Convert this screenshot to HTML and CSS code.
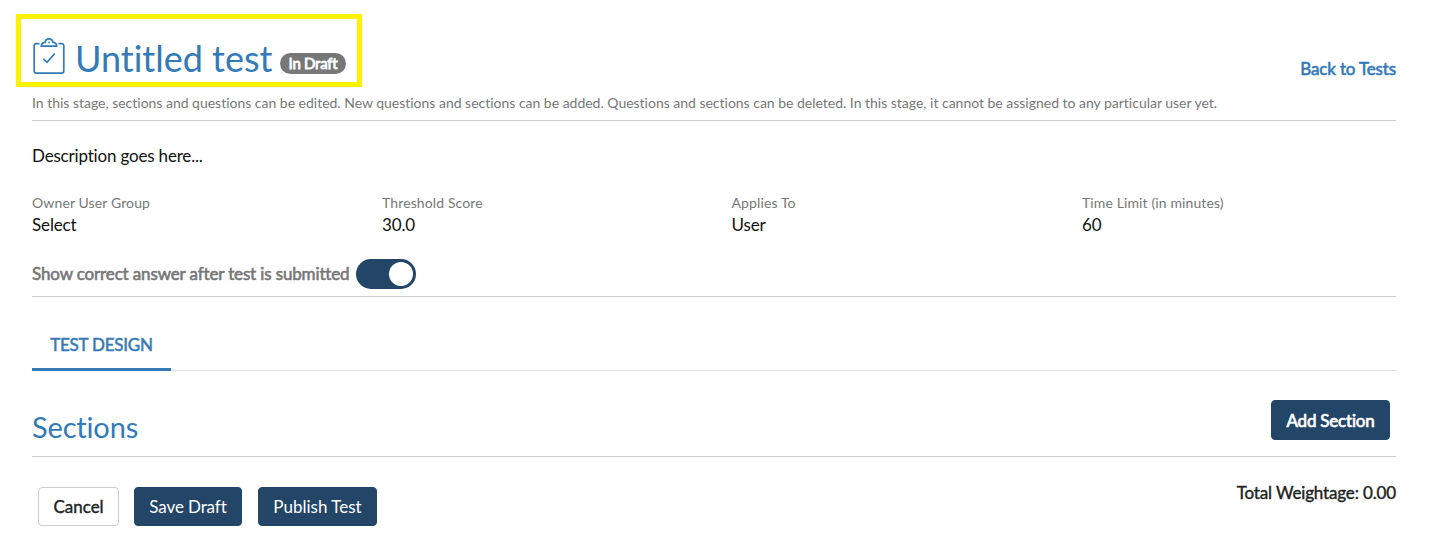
FILE: index.html
```html
<!DOCTYPE html>
<html lang="en"><head><meta charset="utf-8"><title>Untitled test</title><link rel="stylesheet" href="styles.css"></head>
<body><main class="page">
<header class="header">
<div class="title-box">
<svg class="clip" viewBox="0 0 32 37" width="32" height="37" fill="none" stroke="#337ab7" stroke-width="1.7"><path d="M6.500 5.700H3.300Q1.200 5.700 1.200 8V33Q1.200 35.200 3.300 35.200H28.700Q30.800 35.200 30.800 33V8Q30.800 5.700 28.700 5.700H25.500"/><path d="M8.300 8.200C8.300 5.500 9.800 4.700 12 4.400C12.500 2 13.700 .9 16 .9S19.500 2 20 4.400C22.200 4.700 23.700 5.500 23.700 8.200Z"/><circle cx="16" cy="4.500" r=".9" fill="#337ab7" stroke="none"/><path d="M10.300 20.800L14 24.300L21.800 15.500"/></svg>
<h1 class="title">Untitled test</h1><span class="badge">In Draft</span></div>
<a class="back">Back to Tests</a></header>
<p class="note">In this stage, sections and questions can be edited. New questions and sections can be added. Questions and sections can be deleted. In this stage, it cannot be assigned to any particular user yet.</p>
<p class="description">Description goes here...</p>
<section class="fields">
<div><div class="label">Owner User Group</div><div class="value">Select</div></div>
<div><div class="label">Threshold Score</div><div class="value">30.0</div></div>
<div><div class="label">Applies To</div><div class="value">User</div></div>
<div><div class="label">Time Limit (in minutes)</div><div class="value">60</div></div>
</section>
<div class="toggle-row"><span class="toggle-label">Show correct answer after test is submitted</span><span class="switch"></span></div>
<nav class="tabs"><span class="tab">TEST DESIGN</span></nav>
<div class="sections"><h2 class="heading">Sections</h2><button class="btn primary add">Add Section</button></div>
<footer class="footer"><div class="actions"><button class="btn cancel">Cancel</button><button class="btn primary save">Save Draft</button><button class="btn primary publish">Publish Test</button></div><span class="total">Total Weightage: 0.00</span></footer>
</main></body></html>
```
FILE: styles.css
```css
*{box-sizing:border-box}
body{margin:0;background:#fff;color:#111;font:17px/24px Lato,sans-serif;font-variant-ligatures:none}
h1,h2,p{margin:0;font-weight:400}
.page{padding:14px 35px 0 32px}
.header{display:flex;justify-content:space-between;height:74px}
.title-box{display:flex;width:346px;height:73px;margin-left:-16px;border:5px solid #fff200;padding:0 0 0 12px}
.clip{margin-top:19px;flex:none}
.title{width:196px;margin:18px 0 0 10px;font-size:36px;line-height:42px;color:#337ab7;white-space:nowrap}
.badge{flex:none;margin:34px 0 0 9px;width:66px;height:21px;border-radius:11px;background:#777;color:#fff;font-size:15px;letter-spacing:-.25px;line-height:20px;text-align:center;-webkit-text-stroke:.8px #fff;white-space:nowrap}
.back{margin-top:43px;letter-spacing:-.15px;color:#337ab7;-webkit-text-stroke:.6px #337ab7}
.note{height:33px;padding-top:5px;border-bottom:1px solid #ccc;font-size:14px;line-height:20px;letter-spacing:-.014px;color:#777;white-space:nowrap}
.description{height:71px;padding-top:23px;letter-spacing:-.18px}
.fields{display:grid;grid-template-columns:350px 349.5px 350.5px 1fr;height:63px}
.label{font-size:14px;line-height:22px;letter-spacing:.12px;color:#777}
.value{line-height:22px;letter-spacing:-.13px}
.toggle-row{display:flex;height:42px;border-bottom:1px solid #ccc;padding-top:4px}
.toggle-label{width:317px;margin-top:3px;letter-spacing:-.14px;white-space:nowrap;color:#777;-webkit-text-stroke:.6px #777}
.switch{margin-left:7px;width:60px;height:30px;border-radius:15px;background:#234567;padding:3px 3px 3px 33px}
.switch::before{content:"";display:block;width:24px;height:24px;border-radius:50%;background:#fff}
.tabs{height:74px;border-bottom:1px solid #ddd;padding-top:23px;display:flex}
.tab{width:139px;height:51px;padding-top:13px;text-align:center;letter-spacing:-.22px;border-bottom:3px solid #337ab7;color:#337ab7;-webkit-text-stroke:.5px #337ab7}
.sections{display:flex;justify-content:space-between;height:86px;border-bottom:1px solid #ccc;padding:29px 6px 0 0}
.heading{margin-top:9px;font-size:29px;line-height:36px;letter-spacing:-.16px;color:#337ab7}
.btn{height:39px;border:1px solid #ccc;border-radius:4px;background:#fff;font:17px/24px Lato,sans-serif;font-variant-ligatures:none;color:#222;padding:0;white-space:nowrap}
.primary{background:#234567;border-color:#234567;color:#fff}
.add{width:119px;height:40px;padding-top:2px;letter-spacing:-.2px;-webkit-text-stroke:.7px #fff}
.footer{display:flex;justify-content:space-between;padding-top:30px}
.actions{display:flex;margin-left:6px}
.cancel{width:81px;-webkit-text-stroke:.4px #222}
.save{width:108px;margin-left:15px;letter-spacing:-.1px}
.publish{width:119px;margin-left:16px}
.total{margin-top:-6px;letter-spacing:-.15px;color:#222;-webkit-text-stroke:.4px #222}
```
